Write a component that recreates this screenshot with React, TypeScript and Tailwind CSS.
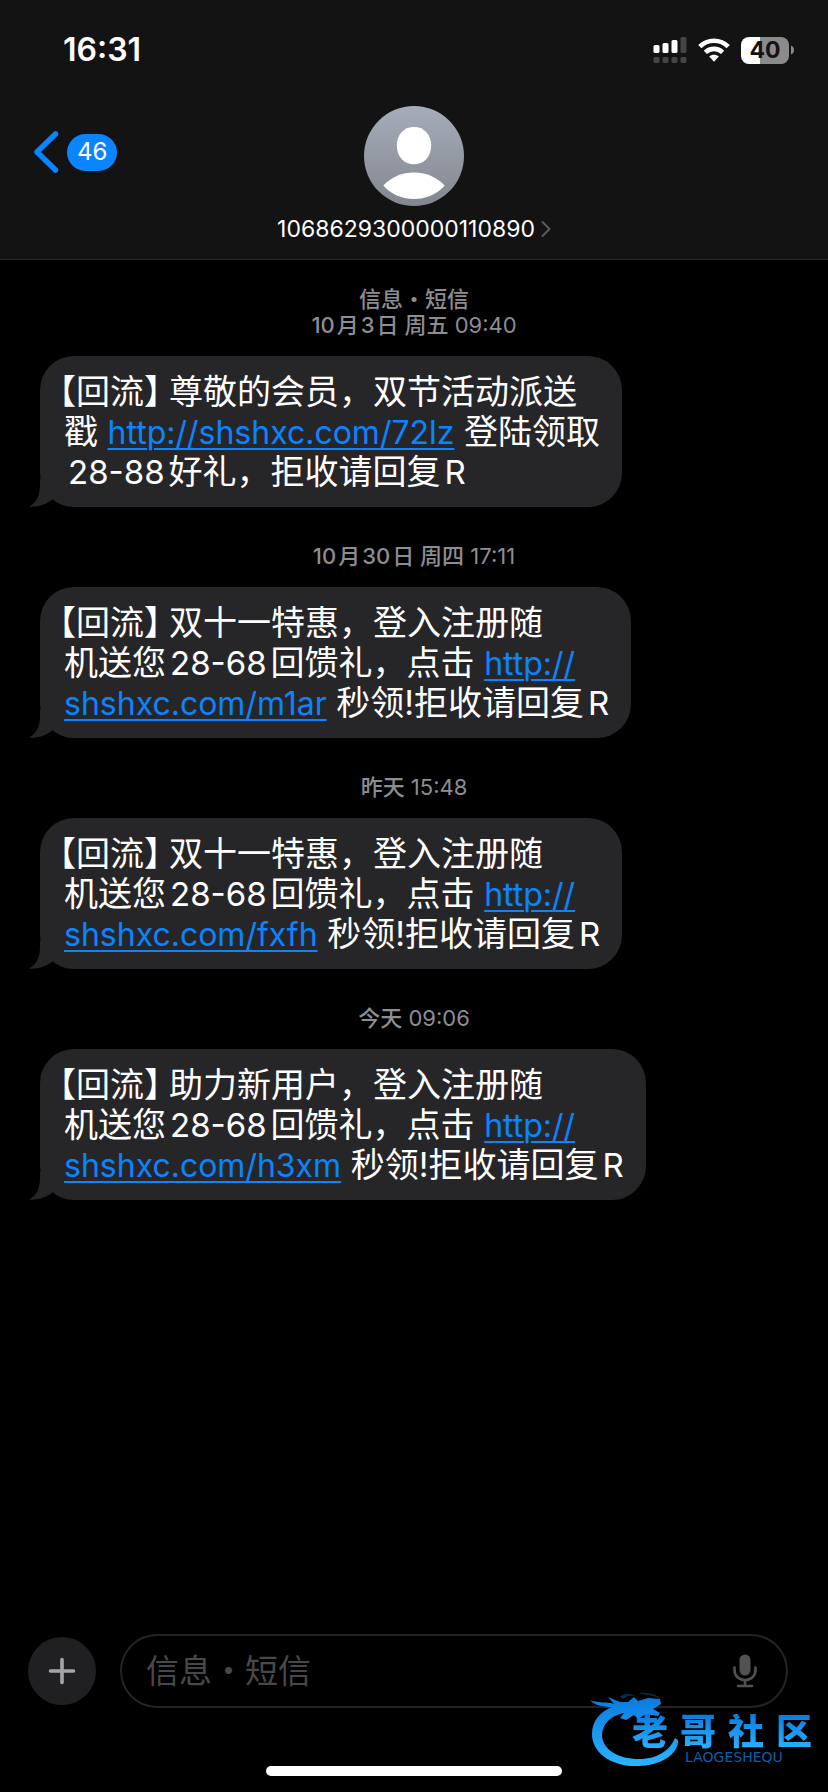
import type { ReactNode } from "react";

type Message = { id: string; stamp: ReactNode; lines: ReactNode[] };

function SiteLink({ href, children }: { href: string; children: ReactNode }) {
  return (
    <a href={href} className="text-[32px] text-[#0a84ff] underline decoration-2 underline-offset-4">
      {children}
    </a>
  );
}

function Opening({ children }: { children: ReactNode }) {
  return (
    <>
      <span className="-ml-[5px] [font-feature-settings:'halt']">【</span>
      回流
      <span className="mr-2 [font-feature-settings:'halt']">】</span>
      {children}
    </>
  );
}

function Range({ children }: { children: ReactNode }) {
  return <span className="mx-1 text-[33px]">{children}</span>;
}

function Code({ children }: { children: ReactNode }) {
  return <span className="ml-1 text-[33px]">{children}</span>;
}

function promo(id: string, stamp: ReactNode, title: string, path: string): Message {
  const href = "http://shshxc.com/" + path;
  return {
    id,
    stamp,
    lines: [
      <Opening>{title}，登入注册随</Opening>,
      <>
        机送您<Range>28-68</Range>回馈礼，点击 <SiteLink href={href}>http://</SiteLink>
      </>,
      <>
        <SiteLink href={href}>shshxc.com/{path}</SiteLink> 秒领!拒收请回复<Code>R</Code>
      </>,
    ],
  };
}

const messages: Message[] = [
  {
    id: "72lz",
    stamp: (
      <>
        <p className="font-medium">信息・短信</p>
        <p>
          <span className="font-medium">10<span className="mx-0.5">月</span>3<span className="ml-0.5">日</span> 周五</span> 09:40
        </p>
      </>
    ),
    lines: [
      <Opening>尊敬的会员，双节活动派送</Opening>,
      <>
        戳 <SiteLink href="http://shshxc.com/72lz">http://shshxc.com/72lz</SiteLink> 登陆领取
      </>,
      <>
        <Range>28-88</Range>好礼，拒收请回复<Code>R</Code>
      </>,
    ],
  },
  promo(
    "m1ar",
    <p>
      <span className="font-medium">10<span className="mx-0.5">月</span>30<span className="ml-0.5">日</span> 周四</span> 17:11
    </p>,
    "双十一特惠",
    "m1ar",
  ),
  promo("fxfh", <p><span className="font-medium">昨天</span> 15:48</p>, "双十一特惠", "fxfh"),
  promo("h3xm", <p><span className="font-medium">今天</span> 09:06</p>, "助力新用户", "h3xm"),
];

function StatusBar() {
  return (
    <div className="flex h-[100px] items-center justify-between pr-[34px] pl-[63px]">
      <time className="text-[32px] leading-10 font-semibold">16:31</time>
      <div className="flex items-center gap-[10px]">
        <svg width="34" height="28" viewBox="0 0 34 28" aria-label="信号">
          <g fill="#fff">
            <rect x="0.5" y="9" width="6" height="8" rx="1.6" />
            <rect x="9.5" y="7" width="6" height="10" rx="1.6" />
            <rect x="18.5" y="4" width="6" height="13" rx="1.6" />
          </g>
          <g fill="#454545">
            <rect x="27.5" y="1" width="6" height="16" rx="1.6" />
            <rect x="0.5" y="21" width="6" height="6" rx="1.6" />
            <rect x="9.5" y="21" width="6" height="6" rx="1.6" />
            <rect x="18.5" y="21" width="6" height="6" rx="1.6" />
            <rect x="27.5" y="21" width="6" height="6" rx="1.6" />
          </g>
        </svg>
        <svg width="34" height="26" viewBox="0 0 34 26" aria-label="Wi-Fi">
          <g fill="none" stroke="#fff" strokeWidth="4.6">
            <path d="M2.8 9.6 C10.5 1.7 23.5 1.7 31.2 9.6" />
            <path d="M8.4 15.3 C13.2 10.7 20.8 10.7 25.6 15.3" />
          </g>
          <path fill="#fff" d="M12.2 19.5 C14.9 17.2 19.1 17.2 21.8 19.5 L17 24.8Z" />
        </svg>
        <div className="flex items-center gap-[2px]">
          <div className="flex h-[27px] w-12 items-center justify-center rounded-lg bg-linear-to-r from-white from-40% to-[#8b8b8b] to-40% text-[23px] leading-none font-bold text-[#131313]">
            40
          </div>
          <svg width="3" height="10" viewBox="0 0 3 10" aria-hidden="true">
            <path d="M0 0.5 C4 2 4 8 0 9.5Z" fill="#8b8b8b" />
          </svg>
        </div>
      </div>
    </div>
  );
}

function Avatar() {
  return (
    <svg className="size-[100px]" viewBox="0 0 100 100" aria-hidden="true">
      <defs>
        <linearGradient id="avatar-fill" x1="0" y1="0" x2="0" y2="1">
          <stop offset="0" stopColor="#a6acba" />
          <stop offset="1" stopColor="#83878f" />
        </linearGradient>
      </defs>
      <circle cx="50" cy="50" r="50" fill="url(#avatar-fill)" />
      <path fill="#fff" d="M50 21 C60 21 67.2 28.5 67.2 39.5 C67.2 51 59.5 58.3 50 58.3 C40.5 58.3 32.8 51 32.8 39.5 C32.8 28.5 40 21 50 21Z" />
      <path fill="#fff" d="M19.3 79.5 C35 62 65 62 80.7 79.5 C65 97.5 35 97.5 19.3 79.5Z" />
    </svg>
  );
}

function Bubble({ lines }: { lines: ReactNode[] }) {
  return (
    <div className="relative w-fit rounded-[34px] bg-[#262628] pt-4 pr-[22px] pb-[15px] pl-6">
      {lines.map((line, i) => (
        <p key={i} className="h-10 text-[34px] leading-10 whitespace-nowrap">
          {line}
        </p>
      ))}
      <svg className="absolute bottom-0 -left-3" width="32" height="28" viewBox="0 0 32 28" aria-hidden="true">
        <path d="M12 0 V6 C12 16 8.5 24 1 27.6 C10 28.6 19 25 25 20 L32 0Z" fill="#262628" />
      </svg>
    </div>
  );
}

function Watermark() {
  return (
    <div className="pointer-events-none absolute right-4 bottom-6 flex text-[#1797f5]">
      <svg className="-mr-12" width="90" height="78" viewBox="0 0 90 78" aria-hidden="true">
        <defs>
          <linearGradient id="dragon-fill" x1="0" y1="0" x2="0" y2="1">
            <stop offset="0" stopColor="#0a7ae0" />
            <stop offset="1" stopColor="#2bb3ff" />
          </linearGradient>
        </defs>
        <g fill="url(#dragon-fill)">
          <path d="M0 10 C7 13 14 12 21 13 L24 14 L18 7 L30 12 L38 12 L44 7 L48 11 L58 8 L70 9 L71 14 L63 19 L70 23 L68 26 L56 24 L48 29 L44 25 L36 30 L30 28 L34 23 C20 26 12 34 12 46 C13 60 29 69 49 69 C68 69 80 60 85 48 L88 50 C89 64 70 76 48 76 C22 77 2 63 2 44 C2 31 10 22 22 17 C13 17 4 15 0 10Z" />
          <path d="M30 7 C34 3 40 3 45 6 C40 5 36 6 33 9Z" opacity="0.3" />
          <path d="M48 3 C57 2 67 4 71 9 C64 5 55 5 48 3Z" opacity="0.3" />
        </g>
      </svg>
      <div className="flex flex-col items-center pt-6">
        <p className="flex gap-3 bg-linear-to-b from-[#0a7ae0] to-[#2bb3ff] bg-clip-text text-4xl leading-9 font-black text-transparent">
          <span>老</span>
          <span>哥</span>
          <span>社</span>
          <span>区</span>
        </p>
        <p className="ml-6 font-['DejaVu_Sans',sans-serif] text-sm leading-none text-[#0b5fa8]">LAOGESHEQU</p>
      </div>
    </div>
  );
}

export default function App() {
  return (
    <div className="flex min-h-screen flex-col bg-black font-['Inter','Noto_Sans_CJK_SC',sans-serif] text-white">
      <header className="border-b border-[#29292b] bg-[#131313]">
        <StatusBar />
        <div className="grid grid-cols-[1fr_auto_1fr] items-start pt-1.5 pb-4">
          <a href="#conversations" className="flex w-fit items-center gap-2 pt-6 pl-[33px]" aria-label="返回，46 条未读">
            <svg width="26" height="44" viewBox="0 0 26 44" fill="none" stroke="#0a84ff" strokeWidth="5.5" strokeLinecap="round" strokeLinejoin="round" aria-hidden="true">
              <path d="M22.5 4 L4 22 L22.5 40" />
            </svg>
            <span className="flex h-[37px] items-center rounded-full bg-[#0a84ff] px-[10px] text-2xl">46</span>
          </a>
          <button type="button" className="flex flex-col items-center">
            <Avatar />
            <span className="flex items-center gap-1.5 pt-[9px] text-[23px] leading-7">
              <span>1068629300000110890</span>
              <svg width="10" height="18" viewBox="0 0 10 18" fill="none" stroke="#5a5a5e" strokeWidth="2" strokeLinecap="round" strokeLinejoin="round" aria-hidden="true">
                <path d="M1.5 2 L8.5 9 L1.5 16" />
              </svg>
            </span>
          </button>
        </div>
      </header>

      <main className="flex flex-1 flex-col gap-9 pt-[26px]">
        {messages.map((m) => (
          <section key={m.id} className="flex flex-col gap-[18px] pl-10">
            <div className="-ml-10 text-center text-[22px] leading-[26px] text-[#8d8d93]">{m.stamp}</div>
            <Bubble lines={m.lines} />
          </section>
        ))}
      </main>

      <footer className="relative pb-4">
        <form className="flex items-center gap-6 pr-10 pl-7">
          <button type="button" aria-label="添加" className="flex size-[68px] shrink-0 items-center justify-center rounded-full bg-[#202022]">
            <svg width="28" height="28" viewBox="0 0 28 28" stroke="#a5a5a8" strokeWidth="3.6" strokeLinecap="round" aria-hidden="true">
              <path d="M14 2.5 V25.5 M2.5 14 H25.5" />
            </svg>
          </button>
          <div className="flex h-[74px] min-w-0 flex-1 items-center rounded-full border-2 border-[#242426] pr-7 pl-6">
            <input
              type="text"
              aria-label="信息・短信"
              placeholder="信息・短信"
              className="min-w-0 flex-1 bg-transparent text-[33px] leading-10 outline-none placeholder:text-[#48484a]"
            />
            <button type="button" aria-label="语音输入">
              <svg width="26" height="34" viewBox="0 0 26 34" aria-hidden="true">
                <rect x="7.5" y="0.5" width="11" height="21" rx="5.5" fill="#525254" />
                <path d="M2.5 13.5 V16 C2.5 22 7 26 13 26 C19 26 23.5 22 23.5 16 V13.5 M13 26 V32 M6 32 H20" fill="none" stroke="#525254" strokeWidth="2.6" strokeLinecap="round" />
              </svg>
            </button>
          </div>
        </form>
        <div className="mx-auto mt-[58px] h-[10px] w-[296px] rounded-full bg-white" />
        <Watermark />
      </footer>
    </div>
  );
}
